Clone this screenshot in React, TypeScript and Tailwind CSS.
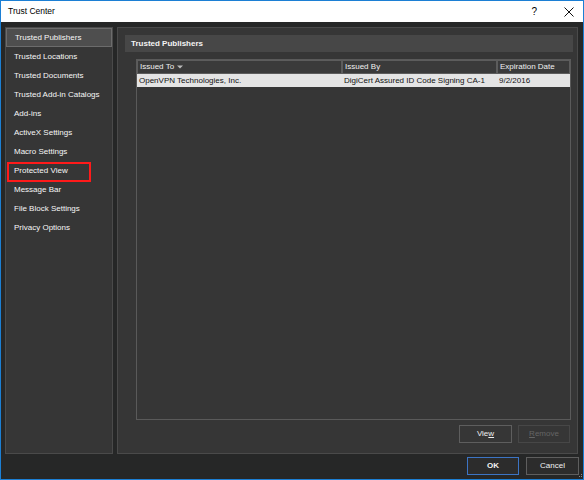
const navItems = [
  'Trusted Publishers',
  'Trusted Locations',
  'Trusted Documents',
  'Trusted Add-in Catalogs',
  'Add-ins',
  'ActiveX Settings',
  'Macro Settings',
  'Protected View',
  'Message Bar',
  'File Block Settings',
  'Privacy Options',
]

export default function App() {
  return (
    <div
      className="w-[584px] h-[480px] flex flex-col border border-[#1c7fd4] bg-[#262727] text-[8px] overflow-hidden"
      style={{ fontFamily: '"Liberation Sans", Arial, sans-serif' }}
    >
      {/* Title bar */}
      <div className="h-[21px] shrink-0 bg-white flex items-center pl-[7px] pr-[8px] text-black">
        <span className="text-[8.5px]">Trust Center</span>
        <div className="ml-auto flex items-center">
          <span className="text-[10px] mr-[27px]">?</span>
          <svg width="10" height="10" viewBox="0 0 10 10" className="mr-[1px]">
            <path d="M0.5 0.5 L9.5 9.5 M9.5 0.5 L0.5 9.5" stroke="#111" strokeWidth="1" />
          </svg>
        </div>
      </div>

      {/* Body */}
      <div className="flex-1 flex gap-[4px] pl-[4px] pr-[5px] pt-[5px] min-h-0">
        {/* Left nav */}
        <div className="w-[108px] shrink-0 bg-[#363636] border border-[#4a4a4a] flex flex-col">
          {navItems.map((item, i) => (
            <div key={item} className="relative">
              <div
                className={`h-[19px] flex items-center pl-[8px] text-[#f6f6f6] ${
                  i === 0 ? 'bg-[#4e4e4e] border border-[#6c6c6c]' : ''
                }`}
              >
                {item}
              </div>
              {item === 'Protected View' && (
                <div className="absolute left-[1px] top-[1px] w-[84px] h-[20px] border-2 border-[#ff1a1a]" />
              )}
            </div>
          ))}
        </div>

        {/* Right panel */}
        <div className="flex-1 bg-[#363636] border border-[#4a4a4a] flex flex-col pl-[7px] pr-[4px] pt-[7px] pb-[10px]">
          <div className="h-[17px] bg-[#474747] flex items-center pl-[6px] font-bold text-[#f4f4f4]">
            Trusted Publishers
          </div>

          <div className="flex-1 flex flex-col ml-[11px] mr-[2px] mt-[7px]">
            {/* Table */}
            <div className="flex-1 border border-[#5a5a5a] bg-[#363636] flex flex-col">
              <div className="h-[14px] flex text-[#f0f0f0]">
                <div className="w-[205px] bg-[#3a3a3a] border border-[#5c5c5c] flex items-center pl-[2px]">
                  Issued To
                  <svg width="6" height="4" viewBox="0 0 6 4" className="ml-[3px]">
                    <path d="M0 0.5 L6 0.5 L3 3.5 Z" fill="#bbbbbb" />
                  </svg>
                </div>
                <div className="w-[155px] bg-[#3a3a3a] border border-[#5c5c5c] flex items-center pl-[2px]">
                  Issued By
                </div>
                <div className="flex-1 bg-[#3a3a3a] border border-[#5c5c5c] flex items-center pl-[2px]">
                  Expiration Date
                </div>
              </div>
              <div className="h-[13px] flex bg-[#e4e4e4] text-[#111]">
                <div className="w-[205px] flex items-center pl-[2px]">OpenVPN Technologies, Inc.</div>
                <div className="w-[155px] flex items-center pl-[2px]">DigiCert Assured ID Code Signing CA-1</div>
                <div className="flex-1 flex items-center pl-[2px]">9/2/2016</div>
              </div>
            </div>

            {/* View / Remove */}
            <div className="h-[18px] mt-[5px] flex justify-end gap-[6px] mr-[1px]">
              <div className="w-[53px] border border-[#5e5e5e] bg-[#363636] flex items-center justify-center text-[#eeeeee]">
                Vie<span className="underline">w</span>
              </div>
              <div className="w-[52px] border border-[#474747] bg-[#363636] flex items-center justify-center text-[#656565]">
                <span className="underline">R</span>emove
              </div>
            </div>
          </div>
        </div>
      </div>

      {/* Footer */}
      <div className="h-[25px] shrink-0 flex items-center justify-end gap-[7px] pr-[4px] pb-[2px] relative">
        <div className="w-[52px] h-[18px] border border-[#3c74c4] bg-[#2c2c2c] flex items-center justify-center text-[#f2f2f2] font-bold">
          OK
        </div>
        <div className="w-[53px] h-[18px] border border-[#5e5e5e] bg-[#2c2c2c] flex items-center justify-center text-[#f2f2f2]">
          Cancel
        </div>
        <svg width="4" height="4" viewBox="0 0 4 4" className="absolute right-[1px] bottom-[1px]">
          <rect x="3" y="0" width="1" height="1" fill="#888" />
          <rect x="1" y="2" width="1" height="1" fill="#888" />
          <rect x="3" y="2" width="1" height="1" fill="#888" />
        </svg>
      </div>
    </div>
  )
}
